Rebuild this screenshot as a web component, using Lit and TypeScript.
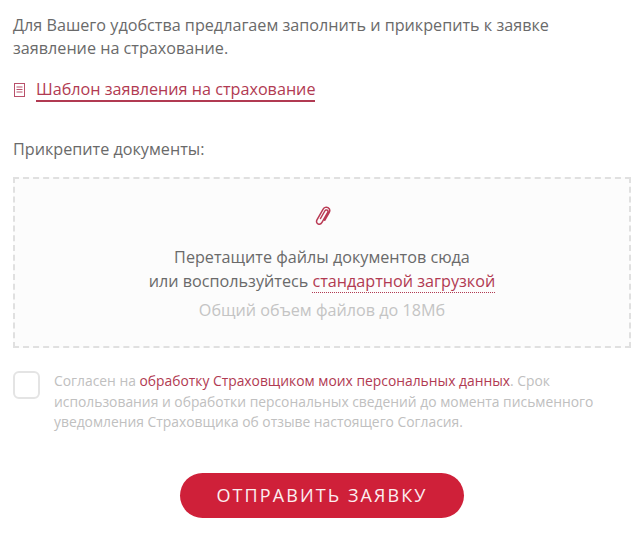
import { LitElement, html, css } from "lit";
import { customElement } from "lit/decorators.js";

@customElement("app-root")
export class AppRoot extends LitElement {
  static styles = css`
    :host { display: block; width: 640px; height: 533px; overflow: hidden; background: #fff; font-family: "Open Sans", sans-serif; color: #6a6a6a; font-size: 16.18px; }
    .wrap { display: flex; flex-direction: column; padding: 14px 9px 0 13px; }
    .intro { margin: 0; line-height: 23px; }
    .tpl { display: flex; align-items: center; gap: 11px; margin-top: 18px; height: 24px; }
    .tpl svg { display: block; width: 12px; height: 14px; }
    .tpl a { color: #b13a52; line-height: 21px; border-bottom: 2px solid #b13a52; text-decoration: none; }
    .label { margin: 36px 0 0; line-height: 23px; }
    .drop { margin-top: 16px; height: 171px; box-sizing: border-box; border: 2px dashed #e0e0e0; background: #fcfcfc; display: flex; flex-direction: column; align-items: center; padding-top: 27px; }
    .clip { display: block; width: 18px; height: 20px; }
    .drag { margin: 19px 0 0; text-align: center; line-height: 24px; }
    .drag a { color: #b13a52; text-decoration: none; border-bottom: 1px dotted #b13a52; }
    .note { margin: 6px 0 0; color: #c4c4c4; line-height: 23px; }
    .consent { display: flex; gap: 14px; margin-top: 23px; }
    .box { flex: none; width: 27px; height: 28px; box-sizing: border-box; border: 2px solid #e4e4e4; border-radius: 6px; background: #fff; }
    .consent p { margin: 0; font-size: 13.85px; line-height: 20.5px; color: #c0c0c0; width: 570px; }
    .consent a { color: #b13a52; text-decoration: none; }
    .btn { align-self: center; margin: 40px 0 0; width: 284px; height: 45px; border: 0; border-radius: 23px; background: #cf2039; color: #fbeef0; font: 400 18px "Open Sans", sans-serif; letter-spacing: 2.1px; padding: 0; }
  `;
  render() {
    return html`<div class="wrap">
      <p class="intro">Для Вашего удобства предлагаем заполнить и прикрепить к заявке<br />заявление на страхование.</p>
      <div class="tpl">
        <svg viewBox="0 0 12 14" fill="none" stroke="#b9506a"><rect x="1.500" y="0.500" width="10" height="13"/><path d="M3.500 4h6M3.500 6.500h6M3.500 9h6"/></svg>
        <a href="#">Шаблон заявления на страхование</a>
      </div>
      <p class="label">Прикрепите документы:</p>
      <div class="drop">
        <svg class="clip" viewBox="0 0 18 20" fill="none" stroke="#b93a54" stroke-width="1.500" stroke-linecap="round" stroke-linejoin="round"><path d="M7.500 12.500l4.300-7.500c.6-1 1.600-1.300 2.400-.8.800.5 1 1.500.4 2.500l-5.600 9.700c-1 1.700-2.700 2.200-4.100 1.400-1.400-.8-1.800-2.500-.8-4.200l5.900-10.200c1.200-2.100 3.300-2.700 5-1.700 1.700 1 2.200 3.100 1 5.200l-4.300 7.400"/></svg>
        <p class="drag">Перетащите файлы документов сюда<br />или воспользуйтесь <a href="#">стандартной загрузкой</a></p>
        <p class="note">Общий объем файлов до 18Мб</p>
      </div>
      <div class="consent">
        <div class="box"></div>
        <p>Согласен на <a href="#">обработку Страховщиком моих персональных данных</a>. Срок использования и обработки персональных сведений до момента письменного уведомления Страховщика об отзыве настоящего Согласия.</p>
      </div>
      <button class="btn">ОТПРАВИТЬ ЗАЯВКУ</button>
    </div>`;
  }
}
